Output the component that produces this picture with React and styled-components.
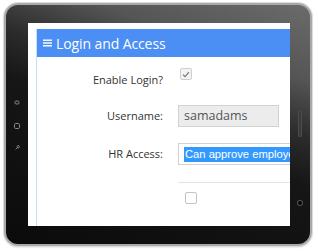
import React from "react";
import styled, { createGlobalStyle } from "styled-components";

const Global = createGlobalStyle`
  html, body {
    margin: 0;
    padding: 0;
    background: #ffffff;
  }
  body {
    font-family: "Open Sans", "Liberation Sans", sans-serif;
  }
`;

const Page = styled.div`
  width: 318px;
  height: 251px;
  padding: 3px 0 0 4px;
  box-sizing: border-box;
`;

const Tablet = styled.div`
  width: 308px;
  height: 243px;
  box-sizing: border-box;
  display: flex;
  border: 2px solid #a9a9a9;
  border-radius: 14px;
  box-shadow: 0 0 0 1px #dcdcdc, 0 1px 2px rgba(0, 0, 0, 0.25);
  background: linear-gradient(
    200deg,
    #6b6b6b 0%,
    #555 22%,
    #2c2c2c 38%,
    #161616 52%,
    #0b0b0b 100%
  );
  padding: 18px 0 18px 0;
  overflow: hidden;
`;

const Bezel = styled.div`
  width: ${(p) => p.$w}px;
  flex: none;
  display: flex;
  flex-direction: column;
  align-items: center;
`;

const SideIcon = styled.svg`
  display: block;
  margin-top: ${(p) => p.$top}px;
`;

const Slider = styled.div`
  width: 4px;
  height: 26px;
  margin-top: 88px;
  border-radius: 2px;
  background: #3a3a3a;
  box-shadow: inset 0 0 0 1px #4c4c4c;
`;

const Camera = styled.div`
  width: 4px;
  height: 4px;
  margin-top: 64px;
  border-radius: 50%;
  background: #000;
  box-shadow: 0 0 0 1px #555;
`;

const Screen = styled.div`
  width: 262px;
  height: 203px;
  flex: none;
  background: #ffffff;
  overflow: hidden;
  padding: 6px 0 0 8px;
  box-sizing: border-box;
`;

const Panel = styled.div`
  width: 320px;
  height: 240px;
  border-left: 1px solid #c9dcf7;
`;

const Header = styled.div`
  height: 28px;
  background: #4b8ef4;
  color: #ffffff;
  display: flex;
  align-items: center;
  padding-left: 6px;
  gap: 4px;
  font-size: 14px;
  letter-spacing: -0.1px;
`;

const Body = styled.div`
  display: flex;
  flex-direction: column;
`;

const Row = styled.div`
  display: grid;
  grid-template-columns: 126px auto;
  column-gap: 15px;
  align-items: ${(p) => p.$align || "center"};
  margin-top: ${(p) => p.$top}px;
`;

const Label = styled.div`
  text-align: right;
  font-size: 11px;
  line-height: 16px;
  color: #333;
  padding-top: ${(p) => p.$pt || 0}px;
`;

const Check = styled.span`
  display: flex;
  align-items: center;
  justify-content: center;
  width: 12px;
  height: 12px;
  box-sizing: border-box;
  border: 1px solid ${(p) => (p.$on ? "#cfcfcf" : "#c4c4c4")};
  border-radius: 2px;
  background: ${(p) => (p.$on ? "#f3f3f3" : "#ffffff")};
  margin-left: ${(p) => p.$ml}px;
`;

const TextInput = styled.div`
  width: 101px;
  height: 22px;
  box-sizing: border-box;
  border: 1px solid #d2d2d2;
  background: #ececec;
  color: #555;
  font-size: 12.5px;
  line-height: 20px;
  padding-left: 5px;
`;

const Select = styled.div`
  width: 160px;
  height: 22px;
  box-sizing: border-box;
  border: 1px solid #d2d2d2;
  background: #fff;
  padding: 3px 0 0 5px;
  display: flex;
  align-items: flex-start;
  overflow: hidden;
`;

const Selected = styled.span`
  display: block;
  height: 15px;
  line-height: 15px;
  padding: 0 1px;
  background: #3399ff;
  color: #ffffff;
  font-family: "Liberation Sans", Arial, sans-serif;
  font-size: 11.2px;
  white-space: nowrap;
`;

const Divider = styled.div`
  margin: 17px 0 0 141px;
  height: 1px;
  background: #e3e3e3;
`;

export default function App() {
  return (
    <>
      <Global />
      <Page>
        <Tablet>
          <Bezel $w={22}>
            <SideIcon $top={77} width="6" height="5" viewBox="0 0 6 5">
              <ellipse cx="3" cy="2.5" rx="2.2" ry="1.6" fill="none" stroke="#8a8a8a" strokeWidth="1" />
            </SideIcon>
            <SideIcon $top={18} width="6" height="6" viewBox="0 0 6 6">
              <rect x="0.5" y="0.5" width="5" height="5" rx="1.2" fill="none" stroke="#8a8a8a" strokeWidth="1" />
            </SideIcon>
            <SideIcon $top={16} width="5" height="5" viewBox="0 0 5 5">
              <circle cx="3.2" cy="1.8" r="1.2" fill="none" stroke="#8a8a8a" strokeWidth="0.9" />
              <line x1="2.4" y1="2.6" x2="0.6" y2="4.4" stroke="#8a8a8a" strokeWidth="0.9" />
            </SideIcon>
          </Bezel>
          <Screen>
            <Panel>
              <Header>
                <svg width="9" height="8" viewBox="0 0 9 8">
                  <rect x="0" y="0.5" width="9" height="1.4" fill="#fff" />
                  <rect x="0" y="3.3" width="9" height="1.4" fill="#fff" />
                  <rect x="0" y="6.1" width="9" height="1.4" fill="#fff" />
                </svg>
                <span>Login and Access</span>
              </Header>
              <Body>
                <Row $top={11} $align="start">
                  <Label $pt={4}>Enable Login?</Label>
                  <Check $on $ml={2}>
                    <svg width="8" height="7" viewBox="0 0 8 7">
                      <path d="M1 3.6 L3 5.6 L7 1.2" fill="none" stroke="#777" strokeWidth="1.2" />
                    </svg>
                  </Check>
                </Row>
                <Row $top={17}>
                  <Label>Username:</Label>
                  <TextInput>samadams</TextInput>
                </Row>
                <Row $top={16}>
                  <Label>HR Access:</Label>
                  <Select>
                    <Selected>Can approve employees</Selected>
                  </Select>
                </Row>
                <Divider />
                <Row $top={9}>
                  <span />
                  <Check $ml={7} />
                </Row>
              </Body>
            </Panel>
          </Screen>
          <Bezel $w={20}>
            <Slider />
            <Camera />
          </Bezel>
        </Tablet>
      </Page>
    </>
  );
}
